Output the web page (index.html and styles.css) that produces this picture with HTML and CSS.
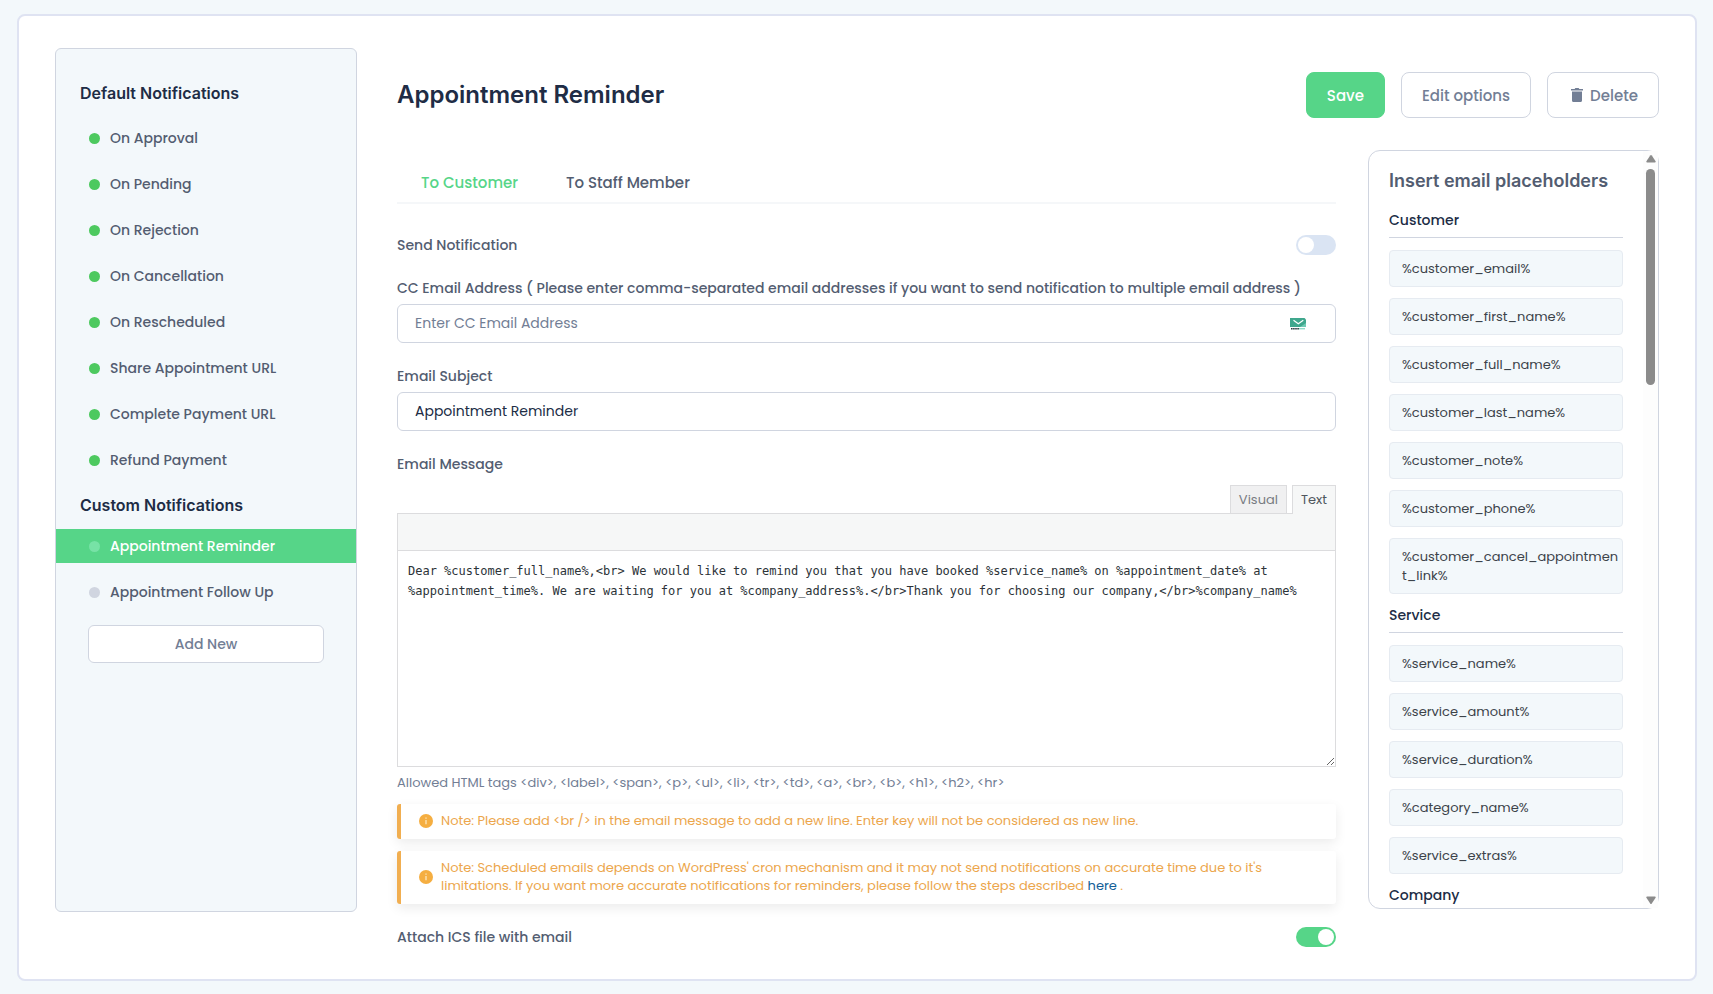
FILE: index.html
```html
<!DOCTYPE html>
<html lang="en">
<head>
    <meta charset="UTF-8">
    <meta name="viewport" content="width=device-width, initial-scale=1.0">
    <title>Email Notifications</title>
    <link rel="stylesheet" href="styles.css">
</head>
<body>
    <div class="card">
        <nav class="sidebar">
            <h2 class="sidebar-title">Default Notifications</h2>
            <ul class="notification-list">
                <li><a href="#" class="notification on">On Approval</a></li>
                <li><a href="#" class="notification on">On Pending</a></li>
                <li><a href="#" class="notification on">On Rejection</a></li>
                <li><a href="#" class="notification on">On Cancellation</a></li>
                <li><a href="#" class="notification on">On Rescheduled</a></li>
                <li><a href="#" class="notification on">Share Appointment URL</a></li>
                <li><a href="#" class="notification on">Complete Payment URL</a></li>
                <li><a href="#" class="notification on">Refund Payment</a></li>
            </ul>
            <h2 class="sidebar-title custom">Custom Notifications</h2>
            <ul class="notification-list">
                <li><a href="#" class="notification active">Appointment Reminder</a></li>
                <li><a href="#" class="notification">Appointment Follow Up</a></li>
            </ul>
            <button type="button" class="btn-add">Add New</button>
        </nav>

        <main class="content">
            <header class="header">
                <h1>Appointment Reminder</h1>
                <div class="actions">
                    <button type="button" class="btn btn-save">Save</button>
                    <button type="button" class="btn">Edit options</button>
                    <button type="button" class="btn btn-delete">
                        <svg width="12" height="14" viewBox="0 0 12 14" fill="#727e95"><path d="M1 3.600h10v8.900c0 .8-.6 1.500-1.400 1.500H2.400C1.600 14 1 13.300 1 12.500zM0 1h3.600L4.400 0h3.200l.8 1H12v1.600H0z"/></svg>
                        Delete
                    </button>
                </div>
            </header>

            <div class="columns">
                <form class="editor-form">
                    <div class="tabs">
                        <button type="button" class="tab selected">To Customer</button>
                        <button type="button" class="tab">To Staff Member</button>
                    </div>

                    <div class="toggle-row">
                        <label for="send-notification">Send Notification</label>
                        <input type="checkbox" id="send-notification" class="toggle">
                    </div>

                    <div class="field">
                        <label for="cc-email">CC Email Address ( Please enter comma-separated email addresses if you want to send notification to multiple email address )</label>
                        <div class="input-box">
                            <input type="text" id="cc-email" placeholder="Enter CC Email Address">
                            <svg class="mail-icon" width="16" height="12" viewBox="0 0 16 12">
                                <path d="M0 0h14.500l1.500 1.500V9H0z" fill="#3fa78d"/>
                                <path d="M10 9l6-4v4z" fill="#6fcab4"/>
                                <path d="M3.500 2.200l4.800 3.600 5-3.600" fill="none" stroke="#fff" stroke-width="1.200"/>
                                <path d="M1 10.700h8" stroke="#2b3b40" stroke-width="1.400" stroke-dasharray="1.600 .5"/>
                                <path d="M9 10.700h6" stroke="#8fdcc9" stroke-width="1.400"/>
                            </svg>
                        </div>
                    </div>

                    <div class="field">
                        <label for="subject">Email Subject</label>
                        <div class="input-box">
                            <input type="text" id="subject" value="Appointment Reminder">
                        </div>
                    </div>

                    <label for="message">Email Message</label>
                    <div class="editor-tabs">
                        <button type="button" class="editor-tab">Visual</button>
                        <button type="button" class="editor-tab current">Text</button>
                    </div>
                    <div class="editor">
                        <div class="toolbar"></div>
                        <textarea id="message">Dear %customer_full_name%,&lt;br&gt; We would like to remind you that you have booked %service_name% on %appointment_date% at %appointment_time%. We are waiting for you at %company_address%.&lt;/br&gt;Thank you for choosing our company,&lt;/br&gt;%company_name%</textarea>
                    </div>
                    <p class="hint">Allowed HTML tags &lt;div&gt;, &lt;label&gt;, &lt;span&gt;, &lt;p&gt;, &lt;ul&gt;, &lt;li&gt;, &lt;tr&gt;, &lt;td&gt;, &lt;a&gt;, &lt;br&gt;, &lt;b&gt;, &lt;h1&gt;, &lt;h2&gt;, &lt;hr&gt;</p>

                    <div class="note">
                        <svg width="14" height="14" viewBox="0 0 14 14"><circle cx="7" cy="7" r="7" fill="#f5ae41"/><path d="M7 3.500v1.300M7 5.900v4.400" stroke="#fdebc8" stroke-width="1.200"/></svg>
                        <p>Note: Please add &lt;br /&gt; in the email message to add a new line. Enter key will not be considered as new line.</p>
                    </div>
                    <div class="note">
                        <svg width="14" height="14" viewBox="0 0 14 14"><circle cx="7" cy="7" r="7" fill="#f5ae41"/><path d="M7 3.500v1.300M7 5.900v4.400" stroke="#fdebc8" stroke-width="1.200"/></svg>
                        <p>Note: Scheduled emails depends on WordPress' cron mechanism and it may not send notifications on accurate time due to it's<br>limitations. If you want more accurate notifications for reminders, please follow the steps described <a href="#">here</a> .</p>
                    </div>

                    <div class="toggle-row attach">
                        <label for="attach-ics">Attach ICS file with email</label>
                        <input type="checkbox" id="attach-ics" class="toggle" checked>
                    </div>
                </form>

                <aside class="placeholders">
                    <div class="placeholder-scroll">
                        <h2>Insert email placeholders</h2>
                        <h3>Customer</h3>
                        <div class="placeholder-list">
                            <button type="button">%customer_email%</button>
                            <button type="button">%customer_first_name%</button>
                            <button type="button">%customer_full_name%</button>
                            <button type="button">%customer_last_name%</button>
                            <button type="button">%customer_note%</button>
                            <button type="button">%customer_phone%</button>
                            <button type="button">%customer_cancel_appointment_link%</button>
                        </div>
                        <h3>Service</h3>
                        <div class="placeholder-list">
                            <button type="button">%service_name%</button>
                            <button type="button">%service_amount%</button>
                            <button type="button">%service_duration%</button>
                            <button type="button">%category_name%</button>
                            <button type="button">%service_extras%</button>
                        </div>
                        <h3>Company</h3>
                    </div>
                    <div class="scrollbar" aria-hidden="true">
                        <svg width="10" height="8" viewBox="0 0 10 8" fill="#8b8b8b"><path d="M4.200.6a1 1 0 0 1 1.600 0L9.600 6.200Q10 7.500 8.800 7.500H1.200Q0 7.500.4 6.200z"/></svg>
                        <div class="track"><div class="thumb"></div></div>
                        <svg width="10" height="8" viewBox="0 0 10 8" fill="#8b8b8b"><path d="M4.200 7.400a1 1 0 0 0 1.600 0L9.600 1.800Q10 .5 8.800.5H1.200Q0 .5.4 1.800z"/></svg>
                    </div>
                </aside>
            </div>
        </main>
    </div>
</body>
</html>
```
FILE: styles.css
```css
* {
    box-sizing: border-box;
}
body {
    margin: 0;
    padding: 14px 16px 12px 17px;
    background-color: #f3f8fb;
    font-family: Poppins, Inter, sans-serif;
    font-size: 14px;
    line-height: 20px;
    color: #535d71;
}
h1, h2, h3, p, ul {
    margin: 0;
    padding: 0;
}
button, input, textarea {
    font-family: inherit;
    font-size: 14px;
}
button {
    cursor: pointer;
}
label {
    display: block;
    font-weight: 500;
}
.card {
    display: flex;
    align-items: flex-start;
    gap: 40px;
    padding: 32px 36px 24px;
    background: white;
    border: 2px solid #dfe3f2;
    border-radius: 8px;
}

/* Sidebar */
.sidebar {
    flex: 0 0 302px;
    min-height: 864px;
    padding: 32px 0;
    background-color: #f3f8fb;
    border: 1px solid #d0d5e0;
    border-radius: 6px;
}
.sidebar-title {
    margin: 0 24px 16px;
    font-family: Inter, sans-serif;
    font-size: 16px;
    font-weight: 600;
    line-height: 24px;
    color: #202c45;
}
.sidebar-title.custom {
    margin-top: 16px;
    margin-bottom: 12px;
}
.notification-list {
    display: flex;
    flex-direction: column;
    gap: 12px;
    list-style: none;
}
.notification {
    display: flex;
    align-items: center;
    gap: 10px;
    height: 34px;
    padding: 0 33px;
    font-weight: 500;
    color: #535d71;
    text-decoration: none;
}
.notification::before {
    content: "";
    width: 11px;
    height: 11px;
    border-radius: 50%;
    background-color: #d0d5e0;
}
.notification.on::before {
    background-color: #4dc95f;
}
.notification.active {
    background-color: #56d588;
    color: white;
}
.notification.active::before {
    background-color: #77e2a6;
}
.btn-add {
    display: block;
    width: calc(100% - 64px);
    height: 38px;
    margin: 16px 32px 0;
    background: white;
    border: 1px solid #d0d5e0;
    border-radius: 6px;
    font-weight: 500;
    color: #727e95;
}

/* Header */
.content {
    flex: 1;
    min-width: 0;
}
.header {
    display: flex;
    justify-content: space-between;
    align-items: center;
    padding: 24px 0 32px;
}
h1 {
    font-family: Inter, sans-serif;
    font-size: 24px;
    font-weight: 600;
    line-height: 32px;
    color: #202c45;
}
.actions {
    display: flex;
    gap: 16px;
}
.btn {
    height: 46px;
    padding: 0 20px;
    background: white;
    border: 1px solid #d0d5e0;
    border-radius: 8px;
    font-size: 15px;
    font-weight: 500;
    color: #727e95;
}
.btn-save {
    background-color: #56d588;
    border-color: #56d588;
    color: white;
}
.btn-delete {
    display: flex;
    align-items: center;
    gap: 7px;
    padding-left: 23px;
}

/* Form */
.columns {
    display: flex;
    align-items: flex-start;
    gap: 32px;
}
.editor-form {
    flex: 1;
    min-width: 0;
}
.tabs {
    display: flex;
    gap: 48px;
    padding: 16px 24px 4px;
    border-bottom: 2px solid #f5f7f9;
}
.tab {
    height: 32px;
    padding: 0;
    background: none;
    border: none;
    font-size: 15px;
    font-weight: 500;
    color: #535d71;
}
.tab.selected {
    color: #56d588;
}
.toggle-row {
    display: flex;
    justify-content: space-between;
    align-items: center;
    margin: 31px 0 23px;
}
.toggle-row.attach {
    margin: 23px 0 8px;
}
.toggle {
    appearance: none;
    display: flex;
    width: 40px;
    height: 20px;
    margin: 0;
    padding: 2px;
    border-radius: 10px;
    background-color: #dae4f3;
}
.toggle::before {
    content: "";
    width: 16px;
    height: 16px;
    border-radius: 50%;
    background: white;
}
.toggle:checked {
    justify-content: flex-end;
    background-color: #56d588;
}
.field {
    margin-bottom: 23px;
}
.input-box {
    display: flex;
    align-items: center;
    height: 39px;
    margin-top: 6px;
    padding: 0 29px 0 17px;
    border: 1px solid #d0d5e0;
    border-radius: 6px;
}
.input-box input {
    flex: 1;
    min-width: 0;
    padding: 0;
    background: none;
    border: none;
    outline: none;
    color: #202c45;
}
.input-box input::placeholder {
    color: #727e95;
}
.editor-tabs {
    display: flex;
    justify-content: flex-end;
    gap: 5px;
    margin-top: 11px;
}
.editor-tab {
    height: 28px;
    padding: 0 8px;
    background-color: #f0f0f1;
    border: 1px solid #dcdcde;
    border-bottom: none;
    font-size: 13px;
    color: #787c82;
}
.editor-tab.current {
    /* covers the editor's top border */
    height: 29px;
    margin-bottom: -1px;
    background-color: #f6f7f7;
    color: #50575e;
    z-index: 1;
}
.editor {
    border: 1px solid #dcdcde;
}
.toolbar {
    height: 37px;
    background-color: #f6f7f7;
    border-bottom: 1px solid #dcdcde;
}
textarea {
    display: block;
    width: 100%;
    height: 215px;
    padding: 10px;
    border: none;
    outline: none;
    resize: vertical;
    font-family: Consolas, "DejaVu Sans Mono", monospace;
    font-size: 12px;
    line-height: 20px;
    color: #2c3338;
}
.hint {
    margin: 6px 0 11px;
    font-size: 13px;
    color: #727e95;
}
.note {
    display: flex;
    align-items: center;
    gap: 8px;
    margin-bottom: 12px;
    padding: 8px 18px 9px;
    background: white;
    border-left: 4px solid #f1ae50;
    border-radius: 3px;
    box-shadow: 0 4px 12px rgba(0,0,0,0.08);
    font-size: 13px;
    line-height: 18px;
    color: #eca64c;
}
.note svg {
    flex: none;
}
.note a {
    color: #135e96;
    text-decoration: none;
}

/* Placeholders */
.placeholders {
    display: flex;
    flex: 0 0 291px;
    max-height: 759px;
    border: 1px solid #d0d5e0;
    border-radius: 12px;
}
.placeholder-scroll {
    flex: 1;
    padding: 18px 20px 0;
    overflow-y: auto;
    scrollbar-width: none;
}
.placeholders h2 {
    margin-bottom: 15px;
    font-family: Inter, sans-serif;
    font-size: 18px;
    font-weight: 600;
    line-height: 24px;
    color: #535d71;
}
.placeholders h3 {
    margin-bottom: 12px;
    padding-bottom: 5px;
    border-bottom: 1px solid #d0d5e0;
    font-size: 14px;
    font-weight: 500;
    line-height: 24px;
    color: #202c45;
}
.placeholder-list {
    display: flex;
    flex-direction: column;
    gap: 11px;
    margin-bottom: 9px;
}
.placeholder-list button {
    padding: 8px 2px 8px 12px;
    background-color: #f3f8fb;
    border: 1px solid #e6ebf1;
    border-radius: 4px;
    font-size: 13px;
    line-height: 19px;
    text-align: left;
    word-break: break-all;
    color: #3c434a;
}
.scrollbar {
    display: flex;
    flex-direction: column;
    align-items: center;
    gap: 6px;
    width: 15px;
    padding: 4px 0;
    background-color: #fdfdfd;
}
.track {
    flex: 1;
}
.thumb {
    width: 9px;
    height: 216px;
    border-radius: 5px;
    background-color: #8b8b8b;
}
```
